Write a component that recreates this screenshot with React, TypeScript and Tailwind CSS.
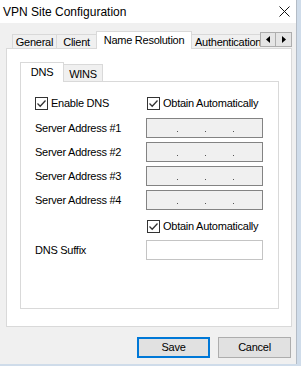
import React from 'react';

const font = { fontFamily: '"Liberation Sans", Arial, sans-serif' };

function Check() {
  return (
    <div className="w-[13px] h-[13px] border border-[#333333] bg-white flex items-center justify-center shrink-0">
      <svg width="11" height="11" viewBox="0 0 11 11">
        <path d="M1.5 5.5 L4.2 8.2 L9.5 2.5" stroke="#333333" strokeWidth="1.3" fill="none" />
      </svg>
    </div>
  );
}

function IpBox() {
  return (
    <div className="relative w-[117px] h-[20px] border border-[#838383] bg-[#f0f0f0]">
      <span className="absolute left-[30px] top-[12px] w-px h-px bg-[#555]" />
      <span className="absolute left-[58px] top-[12px] w-px h-px bg-[#555]" />
      <span className="absolute left-[86px] top-[12px] w-px h-px bg-[#555]" />
    </div>
  );
}

function Row({ label }: { label: string }) {
  return (
    <div className="flex items-center h-[20px]">
      <span className="w-[125px] pl-[14px]">{label}</span>
      <IpBox />
    </div>
  );
}

export default function App() {
  return (
    <div className="w-[301px] h-[366px] bg-[#cfdcea] text-black text-[11px] tracking-[-0.25px] leading-none" style={font}>
      <div className="w-[297px] h-[364px] bg-[#f0f0f0] border-r border-[#b4bcc6] flex flex-col">
        {/* title bar */}
        <div className="h-[23px] bg-white flex items-center justify-between pl-[3px] pr-[6px]">
          <span className="text-[12px] tracking-normal">VPN Site Configuration</span>
          <svg width="11" height="11" viewBox="0 0 11 11">
            <path d="M0.5 0.5 L10.5 10.5 M10.5 0.5 L0.5 10.5" stroke="#111" strokeWidth="1" />
          </svg>
        </div>

        {/* outer tabs */}
        <div className="mt-[8px] ml-[6px] w-[285px] relative h-[17px]">
          <div className="absolute left-0 top-0 w-[254px] h-[18px] overflow-hidden flex items-end pl-[6px] z-10">
            <div className="h-[14px] w-[45px] shrink-0 border border-b-0 border-[#d9d9d9] flex items-center justify-center pt-px mb-px">General</div>
            <div className="h-[14px] w-[40px] shrink-0 border border-b-0 border-l-0 border-[#d9d9d9] flex items-center justify-center pt-px mb-px">Client</div>
            <div className="h-[18px] w-[96px] shrink-0 border border-b-0 border-[#d9d9d9] bg-white flex items-start justify-center pt-[3px] -ml-px">Name Resolution</div>
            <div className="h-[14px] w-[90px] shrink-0 border border-b-0 border-l-0 border-[#d9d9d9] flex items-center pl-[3px] pt-px mb-px whitespace-nowrap">Authentication</div>
          </div>
          <div className="absolute left-[254px] top-[1px] flex z-20">
            <div className="w-[16px] h-[15px] border border-[#adadad] bg-[#e5e5e5] flex items-center justify-center">
              <svg width="4" height="7" viewBox="0 0 4 7"><path d="M4 0 L0 3.5 L4 7 Z" fill="#000" /></svg>
            </div>
            <div className="w-[16px] h-[15px] border border-l-0 border-[#adadad] bg-[#e5e5e5] flex items-center justify-center">
              <svg width="4" height="7" viewBox="0 0 4 7"><path d="M0 0 L4 3.5 L0 7 Z" fill="#000" /></svg>
            </div>
          </div>
        </div>

        {/* outer panel */}
        <div className="ml-[6px] w-[286px] h-[279px] bg-white border border-[#d9d9d9] flex flex-col">
          {/* inner tabs */}
          <div className="mt-[13px] ml-[13px] flex items-end h-[19px] relative z-10">
            <div className="h-[20px] w-[44px] border border-b-0 border-[#d9d9d9] bg-white flex items-start justify-center pt-[4px] -mb-px">DNS</div>
            <div className="h-[17px] w-[39px] border border-b-0 border-l-0 border-[#d9d9d9] bg-[#f0f0f0] flex items-center justify-center pt-[2px]">WINS</div>
          </div>
          <div className="ml-[13px] w-[259px] h-[228px] border border-[#d9d9d9] bg-white flex flex-col pt-[15px]">
            <div className="flex items-center h-[13px]">
              <div className="w-[126px] pl-[14px] flex items-center gap-[3px]">
                <Check />
                <span>Enable DNS</span>
              </div>
              <div className="flex items-center gap-[3px]">
                <Check />
                <span>Obtain Automatically</span>
              </div>
            </div>
            <div className="mt-[8px] flex flex-col gap-[4px]">
              <Row label="Server Address #1" />
              <Row label="Server Address #2" />
              <Row label="Server Address #3" />
              <Row label="Server Address #4" />
            </div>
            <div className="mt-[10px] ml-[126px] flex items-center gap-[3px] h-[13px]">
              <Check />
              <span>Obtain Automatically</span>
            </div>
            <div className="mt-[7px] flex items-center h-[20px]">
              <span className="w-[125px] pl-[14px]">DNS Suffix</span>
              <div className="w-[117px] h-[20px] border border-[#c4c4c4] bg-white" />
            </div>
          </div>
        </div>

        {/* buttons */}
        <div className="mt-[10px] flex justify-end gap-[8px] pr-[5px]">
          <button className="w-[73px] h-[21px] border-2 border-[#0078d7] bg-[#e1e1e1] text-[11px]">Save</button>
          <button className="w-[73px] h-[21px] border border-[#adadad] bg-[#e1e1e1] text-[11px]">Cancel</button>
        </div>
      </div>
    </div>
  );
}
